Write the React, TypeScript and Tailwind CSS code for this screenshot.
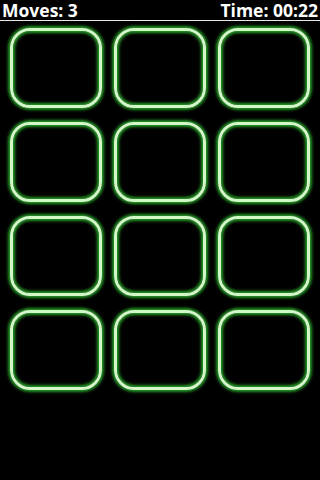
export default function App() {
  const cards = Array.from({ length: 12 }, (_, i) => i);

  return (
    <div className="w-[320px] h-[480px] bg-black overflow-hidden" style={{ fontFamily: '"Open Sans", sans-serif' }}>
      <div className="h-[21px] flex items-start justify-between px-[2px] border-b border-[#e8e8e8]">
        <span className="text-white font-bold text-[17.5px] leading-[20px]">Moves: 3</span>
        <span className="text-white font-bold text-[17.5px] leading-[20px]">Time: 00:22</span>
      </div>

      <div className="grid grid-cols-[92px_92px_92px] gap-x-[12px] gap-y-[14px] pl-[10px] pt-[7px]">
        {cards.map((i) => (
          <div
            key={i}
            className="h-[80px] rounded-[20px] border-[3px] border-[#d2f8c8] shadow-[0_0_3px_2px_#279a27,inset_0_0_3px_2px_#279a27]"
          />
        ))}
      </div>
    </div>
  );
}
